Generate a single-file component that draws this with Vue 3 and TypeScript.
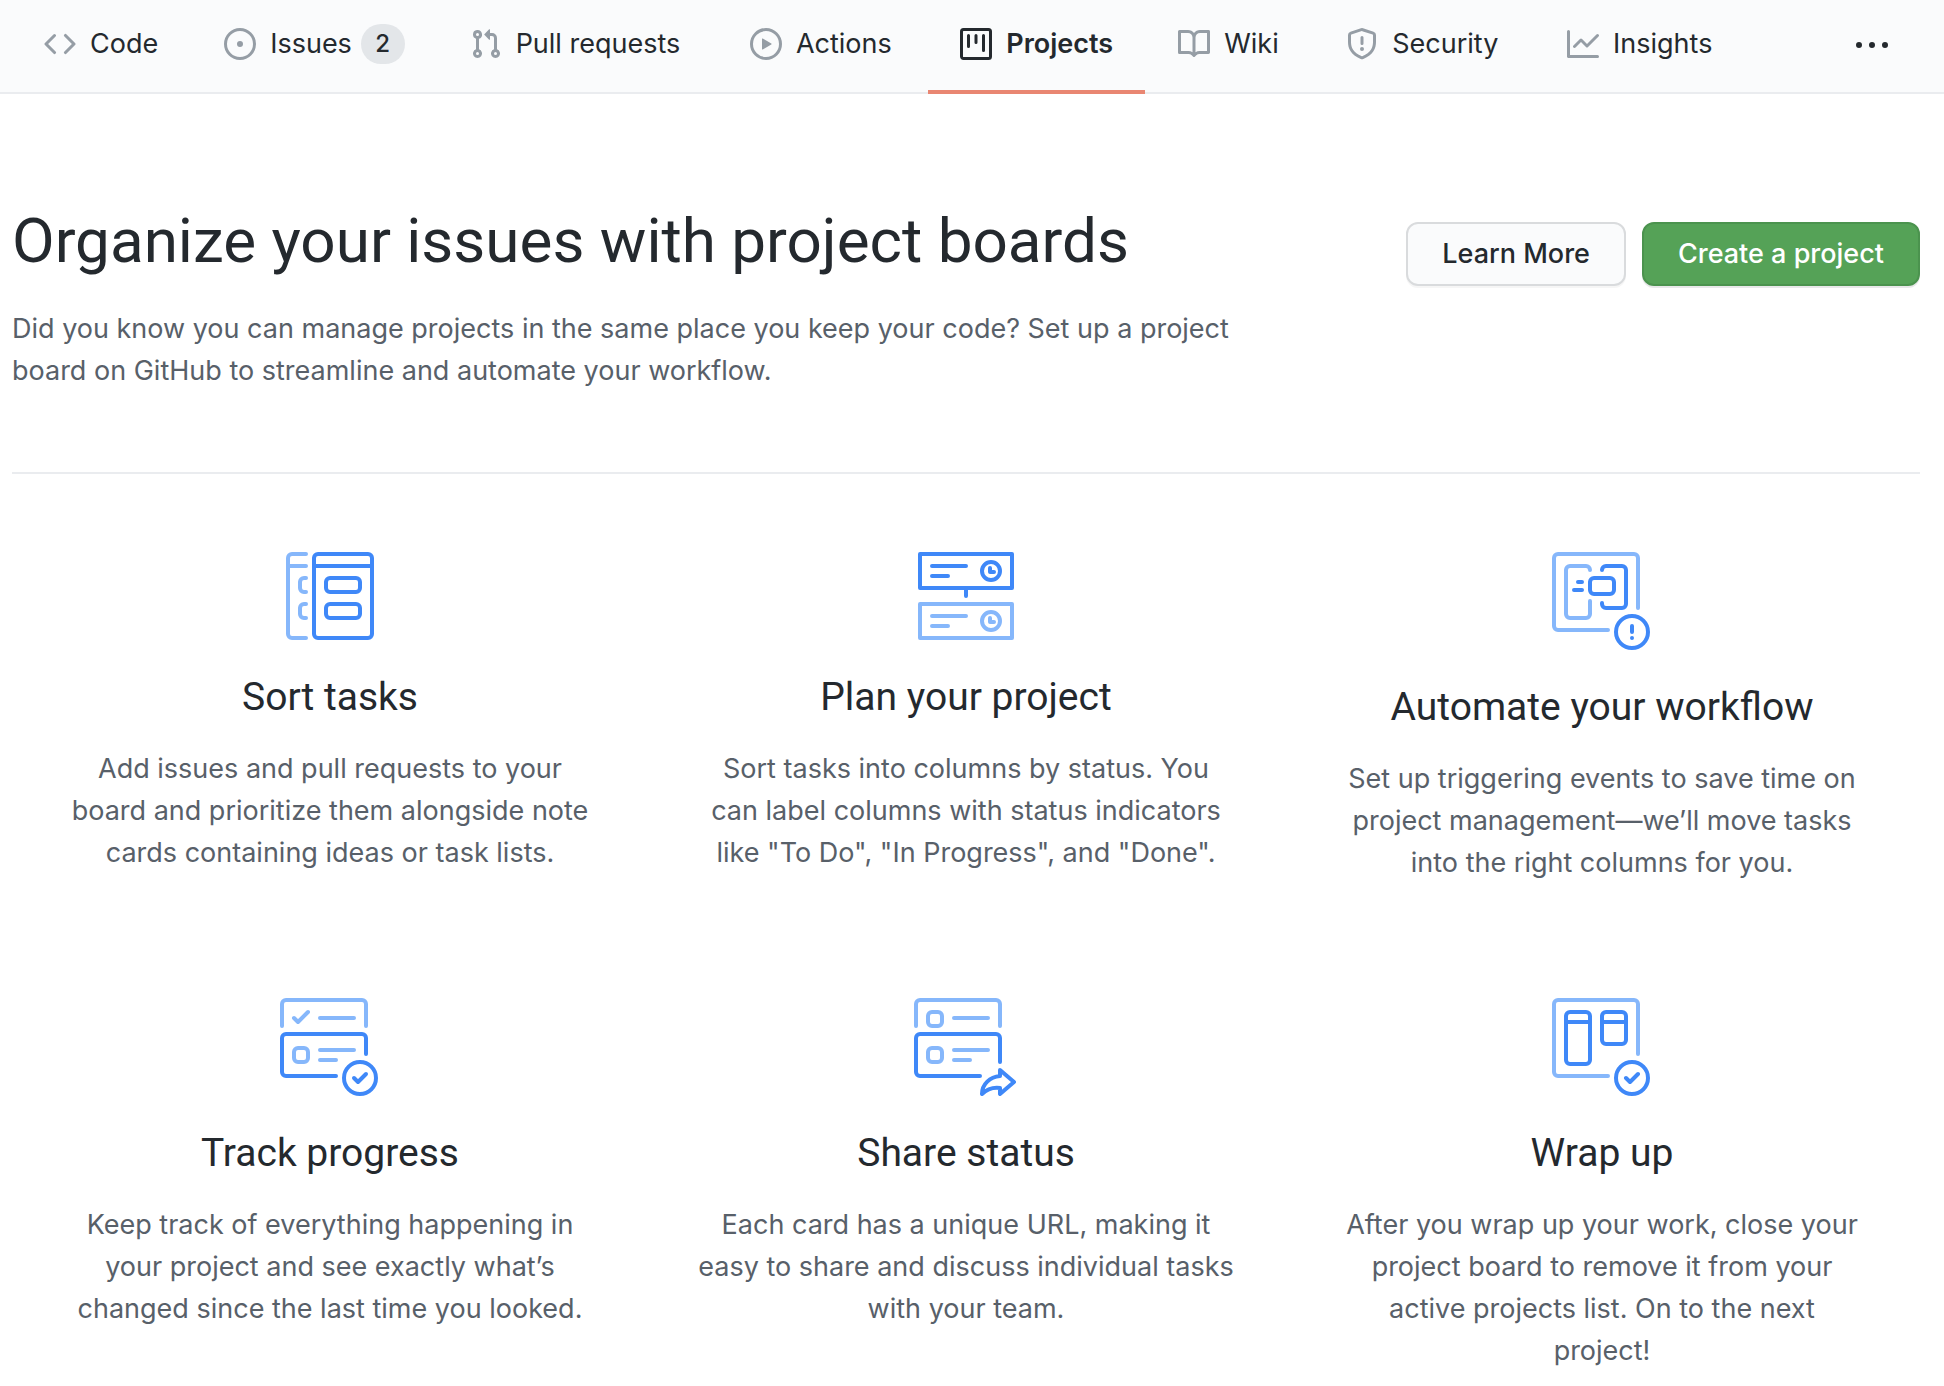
<script setup lang="ts">
interface NavTab {
  label: string
  icon: string
  count?: number
  active?: boolean
}

interface Feature {
  title: string
  text: string
  width: number
  height: number
  light: string
  dark: string
}

const tabs: NavTab[] = [
  {
    label: 'Code',
    icon: 'M4.72 3.22a.75.75 0 011.06 1.06L2.06 8l3.72 3.72a.75.75 0 11-1.06 1.06L.47 8.53a.75.75 0 010-1.06l4.25-4.25zm6.56 0a.75.75 0 10-1.06 1.06L13.94 8l-3.72 3.72a.75.75 0 101.06 1.06l4.25-4.25a.75.75 0 000-1.06l-4.25-4.25z',
  },
  {
    label: 'Issues',
    icon: 'M8 1.5a6.5 6.5 0 100 13 6.5 6.5 0 000-13zM0 8a8 8 0 1116 0A8 8 0 010 8zM8 9.5a1.5 1.5 0 100-3 1.5 1.5 0 000 3z',
    count: 2,
  },
  {
    label: 'Pull requests',
    icon: 'M7.177 3.073L9.573.677A.25.25 0 0110 .854v4.792a.25.25 0 01-.427.177L7.177 3.427a.25.25 0 010-.354zM3.75 2.5a.75.75 0 100 1.5.75.75 0 000-1.5zm-2.25.75a2.25 2.25 0 113 2.122v5.256a2.251 2.251 0 11-1.5 0V5.372A2.25 2.25 0 011.5 3.25zM11 2.5h-1V4h1a1 1 0 011 1v5.628a2.251 2.251 0 101.5 0V5A2.5 2.5 0 0011 2.5zm1 10.25a.75.75 0 111.5 0 .75.75 0 01-1.5 0zM3.75 12a.75.75 0 100 1.5.75.75 0 000-1.5z',
  },
  {
    label: 'Actions',
    icon: 'M1.5 8a6.5 6.5 0 1113 0 6.5 6.5 0 01-13 0zM8 0a8 8 0 100 16A8 8 0 008 0zM6.379 5.227A.25.25 0 006 5.442v5.117a.25.25 0 00.379.214l4.264-2.559a.25.25 0 000-.428L6.379 5.227z',
  },
  {
    label: 'Projects',
    icon: 'M1.75 0A1.75 1.75 0 000 1.75v12.5C0 15.216.784 16 1.75 16h12.5A1.75 1.75 0 0016 14.25V1.75A1.75 1.75 0 0014.25 0H1.75zM1.5 1.75a.25.25 0 01.25-.25h12.5a.25.25 0 01.25.25v12.5a.25.25 0 01-.25.25H1.75a.25.25 0 01-.25-.25V1.75zM11.75 3a.75.75 0 00-.75.75v7.5a.75.75 0 001.5 0v-7.5a.75.75 0 00-.75-.75zm-8.25.75a.75.75 0 011.5 0v5.5a.75.75 0 01-1.5 0v-5.5zM8 3a.75.75 0 00-.75.75v3.5a.75.75 0 001.5 0v-3.5A.75.75 0 008 3z',
    active: true,
  },
  {
    label: 'Wiki',
    icon: 'M0 1.75A.75.75 0 01.75 1h4.253c1.227 0 2.317.59 3 1.501A3.744 3.744 0 0111.006 1h4.245a.75.75 0 01.75.75v10.5a.75.75 0 01-.75.75h-4.507a2.25 2.25 0 00-1.591.659l-.622.621a.75.75 0 01-1.06 0l-.622-.621A2.25 2.25 0 005.258 13H.75a.75.75 0 01-.75-.75V1.75zm8.755 3a2.25 2.25 0 012.25-2.25H14.5v9h-3.757c-.71 0-1.4.201-1.992.572l.004-7.322zm-1.504 7.324l.004-5.073-.002-2.253A2.25 2.25 0 005.003 2.5H1.5v9h3.757a3.75 3.75 0 011.994.574z',
  },
  {
    label: 'Security',
    icon: 'M7.467.133a1.75 1.75 0 011.066 0l5.25 1.68A1.75 1.75 0 0115 3.48V7c0 1.566-.32 3.182-1.303 4.682-.983 1.498-2.585 2.813-5.032 3.855a1.7 1.7 0 01-1.33 0c-2.447-1.042-4.049-2.357-5.032-3.855C1.32 10.182 1 8.566 1 7V3.48a1.75 1.75 0 011.217-1.667l5.25-1.68zm.61 1.429a.25.25 0 00-.153 0l-5.25 1.68a.25.25 0 00-.174.238V7c0 1.358.275 2.666 1.057 3.86.784 1.194 2.121 2.34 4.366 3.297a.2.2 0 00.154 0c2.245-.956 3.582-2.104 4.366-3.298C13.225 9.666 13.5 8.36 13.5 7V3.48a.25.25 0 00-.174-.237l-5.25-1.68zM9 10.5a1 1 0 11-2 0 1 1 0 012 0zm-.25-5.75a.75.75 0 10-1.5 0v3a.75.75 0 001.5 0v-3z',
  },
  {
    label: 'Insights',
    icon: 'M1.5 1.75a.75.75 0 00-1.5 0v12.5c0 .414.336.75.75.75h14.5a.75.75 0 000-1.5H1.5V1.75zm14.28 2.53a.75.75 0 00-1.06-1.06L10 7.94 7.53 5.47a.75.75 0 00-1.06 0L3.22 8.72a.75.75 0 001.06 1.06L7 7.06l2.47 2.47a.75.75 0 001.06 0l5.25-5.25z',
  },
]

// Outline of a rounded rectangle, as path data.
function box(x: number, y: number, w: number, h: number, r = 4): string {
  return (
    `M${x + r} ${y}h${w - 2 * r}a${r} ${r} 0 0 1 ${r} ${r}v${h - 2 * r}` +
    `a${r} ${r} 0 0 1 ${-r} ${r}h${2 * r - w}a${r} ${r} 0 0 1 ${-r} ${-r}` +
    `v${2 * r - h}a${r} ${r} 0 0 1 ${r} ${-r}z`
  )
}

function ring(cx: number, cy: number, r: number): string {
  return `M${cx - r} ${cy}a${r} ${r} 0 1 0 ${2 * r} 0a${r} ${r} 0 1 0 ${-2 * r} 0z`
}

// Board frame left open at the lower right, where the badge sits.
const board = 'M56 78H6a4 4 0 0 1-4-4V6a4 4 0 0 1 4-4H82a4 4 0 0 1 4 4V56'
const badge = ring(80, 80, 16)
const badgeCheck = 'M74 80l4 4 8-8'
const cardTop = 'M2 28V6a4 4 0 0 1 4-4H82a4 4 0 0 1 4 4V28'

const features: Feature[] = [
  {
    title: 'Sort tasks',
    text: 'Add issues and pull requests to your board and prioritize them alongside note cards containing ideas or task lists.',
    width: 88,
    height: 88,
    light:
      'M20 2H6a4 4 0 0 0-4 4V82a4 4 0 0 0 4 4H20M2 14H20M20 26H18a4 4 0 0 0-4 4v6a4 4 0 0 0 4 4h2M20 52H18a4 4 0 0 0-4 4v6a4 4 0 0 0 4 4h2',
    dark: box(28, 2, 58, 84) + 'M28 14H86' + box(40, 26, 34, 14) + box(40, 52, 34, 14),
  },
  {
    title: 'Plan your project',
    text: 'Sort tasks into columns by status. You can label columns with status indicators like "To Do", "In Progress", and "Done".',
    width: 96,
    height: 88,
    light: 'M2 52H94V86H2zM14 64H48M14 74H30' + ring(73, 69, 9) + 'M72 66v4h4',
    dark: 'M2 2H94V36H2zM14 14H48M14 24H30' + ring(73, 19, 9) + 'M72 16v4h4M48 36v8',
  },
  {
    title: 'Automate your workflow',
    text: 'Set up triggering events to save time on project management—we’ll move tasks into the right columns for you.',
    width: 100,
    height: 98,
    light: board + 'M38 18a4 4 0 0 0-4-4H18a4 4 0 0 0-4 4V62a4 4 0 0 0 4 4H34a4 4 0 0 0 4-4V49',
    dark:
      'M50 18a4 4 0 0 1 4-4H70a4 4 0 0 1 4 4V52a4 4 0 0 1-4 4H54a4 4 0 0 1-4-4V51' +
      box(38, 26, 24, 16) + 'M26 30h4M22 38h8' + badge + 'M80 74v6M80 86v0',
  },
  {
    title: 'Track progress',
    text: 'Keep track of everything happening in your project and see exactly what’s changed since the last time you looked.',
    width: 100,
    height: 98,
    light: cardTop + 'M14 20l4 4 10-10M40 20H74' + box(14, 50, 14, 14) + 'M40 52H74M40 62H56',
    dark: 'M56 78H6a4 4 0 0 1-4-4V40a4 4 0 0 1 4-4H82a4 4 0 0 1 4 4V56' + badge + badgeCheck,
  },
  {
    title: 'Share status',
    text: 'Each card has a unique URL, making it easy to share and discuss individual tasks with your team.',
    width: 104,
    height: 98,
    light: cardTop + box(14, 14, 14, 14) + 'M40 20H74' + box(14, 50, 14, 14) + 'M40 52H74M40 62H56',
    dark:
      'M66 78H6a4 4 0 0 1-4-4V40a4 4 0 0 1 4-4H82a4 4 0 0 1 4 4V64' +
      'M86 72L100 84L86 96V90C78 89 73 91 68 96C68 86 76 79 86 78z',
  },
  {
    title: 'Wrap up',
    text: 'After you wrap up your work, close your project board to remove it from your active projects list. On to the next\nproject!',
    width: 100,
    height: 98,
    light: board,
    dark: box(14, 14, 24, 52) + 'M14 24H38' + box(50, 14, 24, 32) + 'M50 24H74' + badge + badgeCheck,
  },
]
</script>

<template>
  <div class="page">
    <nav class="repo-nav" aria-label="Repository">
      <ul class="tabs">
        <li v-for="tab in tabs" :key="tab.label">
          <a
            href="#"
            class="tab"
            :class="{ active: tab.active }"
            :aria-current="tab.active ? 'page' : undefined"
          >
            <svg class="tab-icon" viewBox="0 0 16 16" aria-hidden="true">
              <path fill-rule="evenodd" :d="tab.icon" />
            </svg>
            <span class="tab-label" :data-label="tab.label">{{ tab.label }}</span>
            <span v-if="tab.count" class="counter">{{ tab.count }}</span>
          </a>
        </li>
      </ul>
      <button type="button" class="more" aria-label="More">
        <svg class="more-icon" viewBox="0 0 16 16" aria-hidden="true">
          <path d="M8 9a1.5 1.5 0 100-3 1.5 1.5 0 000 3zM1.5 9a1.5 1.5 0 100-3 1.5 1.5 0 000 3zm13 0a1.5 1.5 0 100-3 1.5 1.5 0 000 3z" />
        </svg>
      </button>
    </nav>

    <main class="content">
      <header class="intro">
        <div class="intro-text">
          <h1>Organize your issues with project boards</h1>
          <p>
            Did you know you can manage projects in the same place you keep your code? Set up a
            project board on GitHub to streamline and automate your workflow.
          </p>
        </div>
        <div class="actions">
          <button type="button" class="btn">Learn More</button>
          <button type="button" class="btn btn-primary">Create a project</button>
        </div>
      </header>

      <ul class="features">
        <li v-for="feature in features" :key="feature.title" class="feature">
          <svg
            class="feature-icon"
            :width="feature.width"
            :height="feature.height"
            :viewBox="`0 0 ${feature.width} ${feature.height}`"
            aria-hidden="true"
          >
            <path class="light" :d="feature.light" />
            <path class="dark" :d="feature.dark" />
          </svg>
          <h2>{{ feature.title }}</h2>
          <p>{{ feature.text }}</p>
        </li>
      </ul>
    </main>
  </div>
</template>

<style>
body {
  margin: 0;
  background: #fff;
}
</style>

<style scoped>
.page {
  font-family: Inter, 'Liberation Sans', sans-serif;
  font-size: 27px;
  line-height: 42px;
  color: #24292e;
}

ul {
  list-style: none;
  margin: 0;
  padding: 0;
}

h1,
h2,
p {
  margin: 0;
  font-weight: 400;
}

h1,
h2 {
  font-family: Roboto, Inter, sans-serif;
}

.repo-nav {
  display: flex;
  align-items: flex-start;
  justify-content: space-between;
  padding: 0 56px 0 12px;
  background: #fafbfc;
  box-shadow: inset 0 -2px #eaecef;
}

.tabs {
  display: flex;
  gap: 1px;
}

.tab {
  display: flex;
  align-items: center;
  box-sizing: border-box;
  height: 94px;
  padding: 0 32px 2px;
  border-bottom: 4px solid transparent;
  color: inherit;
  text-decoration: none;
  white-space: nowrap;
}

.tab.active {
  border-bottom-color: #e98672;
  font-weight: 600;
}

.tab-icon {
  width: 32px;
  height: 32px;
  margin-right: 14px;
  fill: #959da5;
}

.tab.active .tab-icon {
  fill: #24292e;
}

/* Reserves the bold width so tabs keep their place when one becomes active. */
.tab-label::after {
  content: attr(data-label);
  display: block;
  height: 0;
  overflow: hidden;
  visibility: hidden;
  font-weight: 600;
}

.counter {
  min-width: 44px;
  box-sizing: border-box;
  margin-left: 6px;
  border-radius: 20px;
  background: #e3e6e9;
  font-size: 24px;
  font-weight: 500;
  line-height: 40px;
  text-align: center;
}

.more {
  display: flex;
  align-items: center;
  height: 92px;
  padding: 0;
  border: 0;
  background: none;
}

.more-icon {
  width: 32px;
  height: 32px;
  fill: #24292e;
}

.content {
  padding: 0 24px 16px 12px;
}

.intro {
  display: flex;
  align-items: flex-start;
  justify-content: space-between;
  padding: 108px 0 80px;
  border-bottom: 2px solid #eaecef;
}

.intro-text {
  flex: 0 1 1270px;
}

h1 {
  margin-bottom: 28px;
  font-size: 62px;
  line-height: 78px;
}

.intro p,
.feature p {
  color: #586069;
}

.actions {
  display: flex;
  gap: 16px;
  margin-top: 20px;
}

.btn {
  box-sizing: border-box;
  height: 64px;
  padding: 0 34px;
  border: 2px solid #d9dbdd;
  border-radius: 12px;
  background: #fafbfc;
  box-shadow: 0 2px #1b1f230a;
  color: #24292e;
  font: 500 27px/40px Inter, 'Liberation Sans', sans-serif;
  white-space: nowrap;
}

.btn-primary {
  border-color: #4b934e;
  background: #55a257;
  box-shadow: 0 2px #1b1f231a;
  color: #fff;
}

.features {
  display: grid;
  grid-template-columns: repeat(3, 1fr);
  row-gap: 72px;
  padding-top: 78px;
}

.feature {
  padding: 0 48px;
  text-align: center;
}

.feature p {
  white-space: pre-line;
}

.feature-icon {
  display: block;
  margin: 0 auto 32px;
  fill: none;
  stroke-width: 4px;
  stroke-linecap: round;
  stroke-linejoin: round;
}

.light {
  stroke: #86b7fb;
}

.dark {
  stroke: #3f88f8;
}

.feature:nth-child(-n + 3) {
  padding-bottom: 42px;
}

h2 {
  margin-bottom: 26px;
  font-size: 39px;
  line-height: 50px;
}
</style>
